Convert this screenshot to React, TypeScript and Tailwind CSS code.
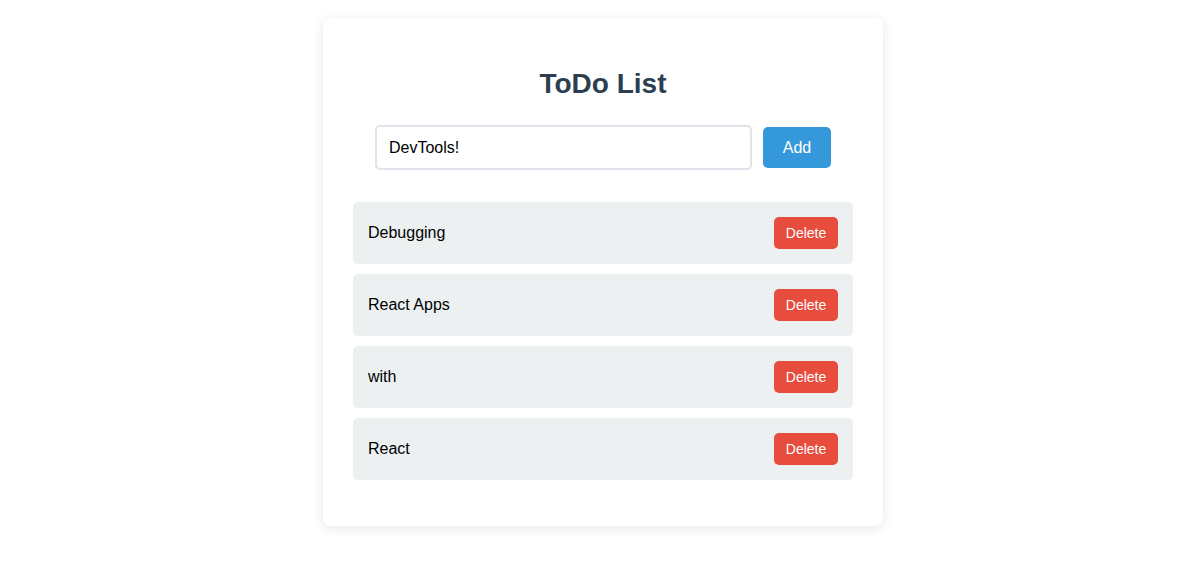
import { useState } from 'react'

export default function App() {
  const [texto, setTexto] = useState('DevTools!')
  const [todos, setTodos] = useState<string[]>(['Debugging', 'React Apps', 'with', 'React'])

  function adicionar() {
    if (!texto.trim()) return
    setTodos([...todos, texto])
    setTexto('')
  }

  function remover(i: number) {
    setTodos(todos.filter((_, idx) => idx !== i))
  }

  return (
    <div className="min-h-screen bg-white pt-[18px] pl-[2px] font-['Liberation_Sans',Arial,sans-serif]">
      <div className="mx-auto w-[560px] rounded-lg bg-white p-[30px] pb-[46px] shadow-[0_2px_12px_rgba(0,0,0,0.1)]">
        <h2 className="mt-[20px] mb-[25px] text-center text-[28px] leading-[32px] font-bold text-[#2c3e50]">ToDo List</h2>

        <div className="flex items-center justify-center gap-[11px]">
          <input
            value={texto}
            onChange={e => setTexto(e.target.value)}
            className="h-[45px] w-[377px] rounded-[5px] border-2 border-[#dfe4ea] px-3 text-base text-black outline-none"
          />
          <button onClick={adicionar} className="h-[41px] w-[68px] rounded-[5px] bg-[#3498db] text-base text-white">
            Add
          </button>
        </div>

        <ul className="mt-[32px] flex flex-col gap-[10px]">
          {todos.map((t, i) => (
            <li key={i} className="flex h-[62px] items-center justify-between rounded-[5px] bg-[#ecf0f1] px-[15px] text-base text-black">
              <span>{t}</span>
              <button onClick={() => remover(i)} className="h-[32px] w-[64px] rounded-[5px] bg-[#e74c3c] text-sm text-white">
                Delete
              </button>
            </li>
          ))}
        </ul>
      </div>
    </div>
  )
}
